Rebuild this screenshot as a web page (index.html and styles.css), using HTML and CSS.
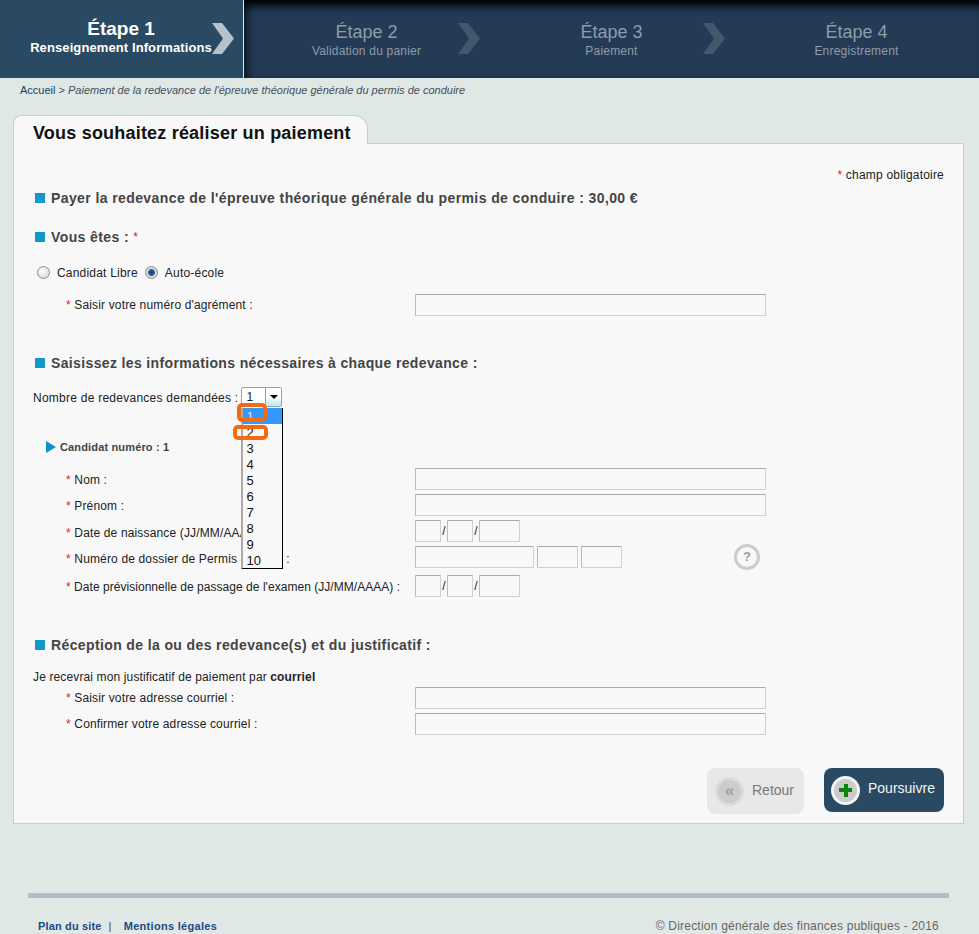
FILE: index.html
```html
<!DOCTYPE html>
<html lang="fr">
<head>
  <meta charset="UTF-8" />
  <meta name="viewport" content="width=device-width, initial-scale=1.0" />
  <title>Paiement de la redevance</title>
  <link rel="stylesheet" href="styles.css">
</head>
<body>
  <div class="steps">
    <div class="step step-active">
      <div class="step-title">Étape 1</div>
      <div class="step-sub">Renseignement Informations</div>
      <svg class="chevron" width="22" height="31" viewBox="0 0 22 31"><polygon points="0,0 10,0 22,15.5 10,31 0,31 11,15.5" /></svg>
    </div>
    <div class="steps-rest">
      <div class="step">
        <div class="step-title">Étape 2</div>
        <div class="step-sub">Validation du panier</div>
        <svg class="chevron" width="22" height="31" viewBox="0 0 22 31"><polygon points="0,0 10,0 22,15.5 10,31 0,31 11,15.5" /></svg>
      </div>
      <div class="step">
        <div class="step-title">Étape 3</div>
        <div class="step-sub">Paiement</div>
        <svg class="chevron" width="22" height="31" viewBox="0 0 22 31"><polygon points="0,0 10,0 22,15.5 10,31 0,31 11,15.5" /></svg>
      </div>
      <div class="step">
        <div class="step-title">Étape 4</div>
        <div class="step-sub">Enregistrement</div>
      </div>
    </div>
  </div>

  <div class="breadcrumb"><a href="#">Accueil</a> &gt; <em>Paiement de la redevance de l'épreuve théorique générale du permis de conduire</em></div>

  <div class="tab">Vous souhaitez réaliser un paiement</div>
  <div class="panel">
    <div class="required-note"><span class="star">*</span> champ obligatoire</div>

    <h2 class="section section-first">Payer la redevance de l'épreuve théorique générale du permis de conduire : 30,00 €</h2>
    <h2 class="section section-you">Vous êtes : <span class="star star-small">*</span></h2>

    <div class="radios">
      <label><input type="radio" name="who"> Candidat Libre</label>
      <label><input type="radio" name="who" checked> Auto-école</label>
    </div>

    <div class="row row-agrement">
      <label class="row-label"><span class="star">*</span> Saisir votre numéro d'agrément :</label>
      <input class="field field-wide" type="text">
    </div>

    <h2 class="section section-info">Saisissez les informations nécessaires à chaque redevance :</h2>

    <div class="count-row">
      <span class="count-label">Nombre de redevances demandées :</span>
      <div class="select">
        <span class="select-value">1</span>
        <span class="select-btn"><span class="select-arrow"></span></span>
        <ul class="select-list">
          <li class="selected">1</li>
          <li>2</li>
          <li>3</li>
          <li>4</li>
          <li>5</li>
          <li>6</li>
          <li>7</li>
          <li>8</li>
          <li>9</li>
          <li>10</li>
        </ul>
        <span class="mark mark-one"></span>
        <span class="mark mark-two"></span>
      </div>
    </div>

    <div class="candidate"><span class="triangle"></span>Candidat numéro : 1</div>

    <div class="row row-nom row-low">
      <label class="row-label"><span class="star">*</span> Nom :</label>
      <input class="field field-wide" type="text">
    </div>
    <div class="row row-low">
      <label class="row-label"><span class="star">*</span> Prénom :</label>
      <input class="field field-wide" type="text">
    </div>
    <div class="row row-lower">
      <label class="row-label"><span class="star">*</span> Date de naissance (JJ/MM/AAAA) :</label>
      <input class="field field-day" type="text"><span class="slash">/</span><input class="field field-day" type="text"><span class="slash">/</span><input class="field field-year" type="text">
    </div>
    <div class="row row-lower">
      <label class="row-label"><span class="star">*</span> Numéro de dossier de Permis (NEPH) :</label>
      <input class="field field-neph" type="text"><input class="field field-neph2" type="text"><input class="field field-neph2" type="text">
      <span class="help">?</span>
    </div>
    <div class="row row-exam row-low">
      <label class="row-label"><span class="star">*</span> Date prévisionnelle de passage de l'examen (JJ/MM/AAAA) :</label>
      <input class="field field-day" type="text"><span class="slash">/</span><input class="field field-day" type="text"><span class="slash">/</span><input class="field field-year" type="text">
    </div>

    <h2 class="section section-reception">Réception de la ou des redevance(s) et du justificatif :</h2>
    <p class="mail-note">Je recevrai mon justificatif de paiement par <strong>courriel</strong></p>

    <div class="row row-mail">
      <label class="row-label"><span class="star">*</span> Saisir votre adresse courriel :</label>
      <input class="field field-wide" type="text">
    </div>
    <div class="row">
      <label class="row-label"><span class="star">*</span> Confirmer votre adresse courriel :</label>
      <input class="field field-wide" type="text">
    </div>

    <div class="buttons">
      <a class="btn btn-back" href="#"><span class="btn-icon">«</span>Retour</a>
      <a class="btn btn-next" href="#"><span class="btn-icon"><span class="plus"></span></span>Poursuivre</a>
    </div>
  </div>

  <div class="footer-bar"></div>
  <div class="footer">
    <div class="footer-links"><a class="plan-link" href="#">Plan du site</a><span class="sep">|</span><a href="#">Mentions légales</a></div>
    <div class="copyright">© Direction générale des finances publiques - 2016</div>
  </div>
</body>
</html>
```

FILE: styles.css
```css
* {
  box-sizing: border-box;
}
body {
  margin: 0;
  background-color: #e0e8e6;
  font-family: "Liberation Sans", Arial, sans-serif;
  font-size: 12px;
  color: #222;
}
a {
  text-decoration: none;
}

/* steps */
.steps {
  display: flex;
  height: 78px;
}
.steps-rest {
  flex: 1;
  display: flex;
  background-color: #243a55;
  box-shadow: inset 0 13px 9px -7px #000, inset 8px 0 8px -4px #0a1a24;
}
.step {
  position: relative;
  width: 245px;
  padding-top: 21px;
  text-align: center;
  color: #8e9cab;
}
.step-active {
  width: 244px;
  padding-top: 18px;
  padding-right: 1px;
  background-color: #2a4a63;
  border-right: 1px solid #e0e8e6;
  color: #fff;
  font-weight: bold;
}
.step-title {
  font-size: 18px;
  line-height: 22px;
}
.step-active .step-title {
  font-size: 19px;
}
.step-sub {
  font-size: 12px;
  line-height: 16px;
  letter-spacing: 0.2px;
}
.step-active .step-sub {
  font-size: 13px;
  line-height: 15px;
  letter-spacing: 0.1px;
}
.chevron {
  position: absolute;
  top: 23px;
  right: 9px;
  fill: #42596d;
}
.step-active .chevron {
  fill: #b4c3cb;
}

/* breadcrumb */
.breadcrumb {
  height: 37px;
  padding: 6px 0 0 20px;
  font-size: 11px;
  line-height: 13px;
  color: #444f5a;
}
.breadcrumb a {
  color: #1a3f68;
}

/* panel */
.tab {
  position: relative;
  z-index: 1;
  width: 355px;
  height: 29px;
  margin: 0 0 -1px 13px;
  padding: 5px 0 0 19px;
  background-color: #f8f8f8;
  border: 1px solid #ccc;
  border-bottom: 0;
  border-radius: 8px 14px 0 0;
  font-size: 18px;
  line-height: 24px;
  font-weight: bold;
  letter-spacing: 0.2px;
  color: #111;
}
.panel {
  width: 951px;
  height: 681px;
  margin-left: 13px;
  padding: 0 19px;
  background-color: #f8f8f8;
  border: 1px solid #ccc;
}
.star {
  color: #d8202a;
}
.star-small {
  font-size: 12px;
  font-weight: normal;
}
.required-note {
  margin-top: 23px;
  line-height: 16px;
  text-align: right;
  letter-spacing: 0.2px;
}

/* section headings */
.section {
  display: flex;
  align-items: center;
  height: 20px;
  margin: 0;
  font-size: 14px;
  font-weight: bold;
  color: #444;
  letter-spacing: 0.4px;
  white-space: pre;
}
.section::before {
  content: "";
  width: 10px;
  height: 10px;
  margin: 0 6px 0 2px;
  background-color: #0f9ac9;
}
.section-first { margin-top: 5px; }
.section-you { margin-top: 19px; }
.section-info { margin-top: 37px; letter-spacing: 0.36px; }
.section-reception { margin-top: 38px; letter-spacing: 0.38px; }

.radios {
  display: flex;
  align-items: center;
  gap: 7px;
  height: 20px;
  margin-top: 15px;
  padding-left: 4px;
  padding-top: 1px;
  letter-spacing: 0.2px;
}
.radios label {
  display: flex;
  align-items: center;
}
.radios input {
  appearance: none;
  width: 13px;
  height: 13px;
  margin: 0 7px 0 0;
  border: 1px solid #8f8f8f;
  border-radius: 50%;
  background: radial-gradient(circle at 40% 35%, #fff, #cfcfcf);
}
.radios input:checked {
  background: radial-gradient(circle, #123f78 0, #2a5f98 3px, #d8d8d8 3.8px);
}

/* form rows */
.row {
  display: flex;
  align-items: center;
  height: 22px;
  margin-top: 4px;
  padding-left: 33px;
}
.row-label {
  flex: none;
  width: 349px;
  white-space: nowrap;
  letter-spacing: 0.15px;
}
.row-low .row-label { padding-top: 2px; }
.row-lower .row-label { padding-top: 4px; }
.row-agrement { margin-top: 12px; }
.row-nom { margin-top: 13px; }
.row-exam { margin-top: 7px; }
.row-exam .row-label { letter-spacing: 0.04px; }
.row-mail { margin-top: 2px; }
.field {
  flex: none;
  height: 22px;
  margin: 0;
  padding: 0;
  background-color: #f8f8f8;
  border: 1px solid #ccd2d4;
  border-top-color: #aaa;
  border-left-color: #bbb;
  border-radius: 1px;
}
.field-wide { width: 351px; }
.field-day { width: 26px; }
.field-year { width: 41px; }
.field-neph { width: 119px; }
.field-neph2 { width: 41px; margin-left: 3px; }
.slash {
  flex: none;
  width: 6px;
  text-align: center;
}
.help {
  flex: none;
  width: 26px;
  height: 26px;
  margin-left: 112px;
  border: 3px solid #ccc;
  border-radius: 50%;
  font-size: 13px;
  font-weight: bold;
  line-height: 20px;
  text-align: center;
  color: #999;
}

/* fake open select */
.count-row {
  display: flex;
  align-items: center;
  gap: 3px;
  height: 20px;
  margin-top: 14px;
}
.count-label {
  padding-top: 2px;
  letter-spacing: 0.25px;
}
.select {
  position: relative;
  display: flex;
  width: 41px;
  height: 20px;
  background-color: #fff;
  border: 1px solid #8ea4b8;
  border-radius: 2px;
}
.select-value {
  width: 23px;
  padding-left: 4px;
  line-height: 18px;
}
.select-btn {
  display: flex;
  align-items: center;
  justify-content: center;
  flex: 1;
  background: linear-gradient(#fff 45%, #bfe8ea);
  border-left: 1px solid #8ea4b8;
}
.select-arrow {
  width: 0;
  height: 0;
  border: 4px solid transparent;
  border-top: 4px solid #000;
  border-bottom: 0;
}
.select-list {
  position: absolute;
  z-index: 2;
  top: 20px;
  left: -1px;
  width: 42px;
  margin: 0;
  padding: 0;
  list-style: none;
  background-color: #f8f8f8;
  border: 1px solid #000;
  border-left: 2px solid #aaa;
  border-top: 0;
}
.select-list li {
  height: 16px;
  padding-left: 3px;
  font-size: 13px;
  line-height: 18px;
  color: #111;
}
.select-list .selected {
  background-color: #3399ff;
  color: #f8d8f0;
}
.mark {
  position: absolute;
  z-index: 3;
  border: 4px solid #f36a10;
  border-radius: 5px;
}
.mark-one {
  top: 15px;
  left: -5px;
  width: 30px;
  height: 19px;
}
.mark-two {
  top: 37px;
  left: -9px;
  width: 35px;
  height: 15px;
}

.candidate {
  display: flex;
  align-items: center;
  height: 16px;
  margin-top: 32px;
  padding-left: 13px;
  font-size: 11px;
  font-weight: bold;
  letter-spacing: 0.15px;
  color: #444;
}
.triangle {
  width: 0;
  height: 0;
  margin-right: 4px;
  border-left: 10px solid #0f8fd0;
  border-top: 6px solid transparent;
  border-bottom: 6px solid transparent;
}
.mail-note {
  height: 16px;
  margin: 14px 0 0;
  line-height: 16px;
  letter-spacing: 0.13px;
}

/* buttons */
.buttons {
  display: flex;
  justify-content: flex-end;
  align-items: flex-start;
  gap: 20px;
  margin-top: 33px;
}
.btn {
  display: flex;
  align-items: center;
  font-size: 14px;
  border-radius: 8px;
}
.btn-back {
  width: 97px;
  height: 46px;
  padding-left: 8px;
  padding-bottom: 3px;
  background-color: #e8e8e8;
  color: #777;
}
.btn-back .btn-icon {
  margin-top: 3px;
}
.btn-next {
  width: 120px;
  height: 44px;
  padding-left: 7px;
  padding-bottom: 5px;
  background-color: #2a4a63;
  color: #f4f4f4;
}
.btn-icon {
  display: flex;
  align-items: center;
  justify-content: center;
  flex: none;
  width: 29px;
  height: 29px;
  margin-right: 8px;
  border: 3px solid #dcdcdc;
  border-radius: 50%;
  background-color: #ccc;
  font-size: 17px;
  font-weight: bold;
  color: #a0a0a0;
}
.btn-next .btn-icon {
  border-color: #f4f4f4;
  margin-top: 5px;
}
.plus {
  width: 13px;
  height: 13px;
  background:
    linear-gradient(#0a840f, #0a840f) center / 13px 4px no-repeat,
    linear-gradient(#0a840f, #0a840f) center / 4px 13px no-repeat;
}

/* footer */
.footer-bar {
  height: 5px;
  margin: 69px 30px 0 28px;
  background-color: #afbfc7;
}
.footer {
  display: flex;
  justify-content: space-between;
  align-items: center;
  height: 14px;
  margin-top: 21px;
  padding: 0 40px 0 38px;
}
.footer-links {
  font-size: 11px;
  font-weight: bold;
  letter-spacing: 0.3px;
}
.footer-links a {
  color: #1d4a88;
}
.footer-links .plan-link {
  letter-spacing: 0.15px;
}
.sep {
  margin: 0 12px 0 7px;
  font-weight: normal;
  color: #444;
}
.copyright {
  letter-spacing: 0.22px;
  color: #666;
}
```
